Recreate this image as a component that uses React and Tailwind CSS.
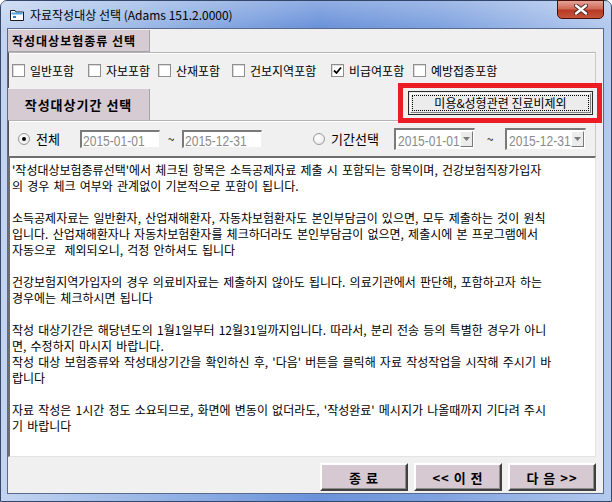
import React from "react";

const kr = "font-['Noto_Sans_CJK_KR','Noto_Sans_CJK_SC',sans-serif]";

const memoLines = [
  "'작성대상보험종류선택'에서 체크된 항목은 소득공제자료 제출 시 포함되는 항목이며, 건강보험직장가입자",
  "의 경우 체크 여부와 관계없이 기본적으로 포함이 됩니다.",
  "",
  "소득공제자료는 일반환자, 산업재해환자, 자동차보험환자도 본인부담금이 있으면, 모두 제출하는 것이 원칙",
  "입니다. 산업재해환자나 자동차보험환자를 체크하더라도 본인부담금이 없으면, 제출시에 본 프로그램에서",
  "자동으로  제외되오니, 걱정 안하셔도 됩니다",
  "",
  "건강보험지역가입자의 경우 의료비자료는 제출하지 않아도 됩니다. 의료기관에서 판단해, 포함하고자 하는",
  "경우에는 체크하시면 됩니다",
  "",
  "작성 대상기간은 해당년도의 1월1일부터 12월31일까지입니다. 따라서, 분리 전송 등의 특별한 경우가 아니",
  "면, 수정하지 마시지 바랍니다.",
  "작성 대상 보험종류와 작성대상기간을 확인하신 후, '다음' 버튼을 클릭해 자료 작성작업을 시작해 주시기 바",
  "랍니다",
  "",
  "자료 작성은 1시간 정도 소요되므로, 화면에 변동이 없더라도, '작성완료' 메시지가 나올때까지 기다려 주시",
  "기 바랍니다",
];

const checks = [
  { label: "일반포함", w: "w-[76px]" },
  { label: "자보포함", w: "w-[70px]" },
  { label: "산재포함", w: "w-[74px]" },
  { label: "건보지역포함", w: "w-[99px]" },
  { label: "비급여포함", w: "w-[82px]", checked: true },
  { label: "예방접종포함", w: "w-[100px]" },
];

function CheckBox({ label, w, checked }) {
  return (
    <div className={`flex items-center gap-[5px] ${w}`}>
      <div className="w-[13px] h-[13px] border border-[#8e8f8f] bg-white shadow-[inset_1px_1px_0_#dcdcdc] flex items-center justify-center">
        {checked && (
          <svg width="9" height="9" viewBox="0 0 9 9">
            <path d="M1 4.5 L3.5 7 L8 1.5" stroke="#000" strokeWidth="1.8" fill="none" />
          </svg>
        )}
      </div>
      <span className="text-[12px] leading-none text-black">{label}</span>
    </div>
  );
}

function Radio({ on, label }) {
  return (
    <div className="flex items-center gap-[6px]">
      <div className="w-[12px] h-[12px] rounded-full border border-[#9a9a9a] bg-[radial-gradient(circle_at_40%_40%,#ffffff,#e4e4e4)] flex items-center justify-center">
        {on && <div className="w-[4px] h-[4px] rounded-full bg-black" />}
      </div>
      <span className="text-[13px] leading-none">{label}</span>
    </div>
  );
}

function DateText({ value }) {
  return (
    <div className="w-[62px] shrink-0">
      <span className="inline-block whitespace-nowrap origin-left scale-x-[0.86] font-['Liberation_Sans',sans-serif] text-[14px] leading-none text-[#8a8a8a]">
        {value}
      </span>
    </div>
  );
}

function DateBox({ value }) {
  return (
    <div className="w-[80px] h-[18px] bg-white border-t-2 border-l-2 border-t-[#7a7a7a] border-l-[#7a7a7a] border-b border-r border-b-[#f0f0f0] border-r-[#f0f0f0] flex items-center pl-[1px]">
      <DateText value={value} />
    </div>
  );
}

function ComboBox({ value }) {
  return (
    <div className="w-[81px] h-[22px] bg-white border-t-2 border-l-2 border-t-[#7a7a7a] border-l-[#7a7a7a] border-b border-r border-b-[#f0f0f0] border-r-[#f0f0f0] flex items-center justify-between pl-[2px] pr-[1px]">
      <DateText value={value} />
      <div className="shrink-0 w-[13px] h-[16px] bg-[#ececec] border border-t-white border-l-white border-r-[#7a7a7a] border-b-[#7a7a7a] flex items-center justify-center">
        <svg width="7" height="4" viewBox="0 0 7 4">
          <path d="M0 0 H7 L3.5 4 Z" fill="#7a7a7a" />
        </svg>
      </div>
    </div>
  );
}

function BottomButton({ children }) {
  return (
    <div className="w-[88px] h-[28px] bg-[#d6c9d2] border-2 border-t-white border-l-white border-r-[#404040] border-b-[#404040] shadow-[inset_-1px_-1px_0_#8c8c8c] flex items-center justify-center">
      <span className="text-[13px] font-bold leading-none tracking-[1px]">{children}</span>
    </div>
  );
}

export default function App() {
  return (
    <div className={`w-[612px] h-[502px] bg-white ${kr} text-black`}>
      <div className="relative w-full h-full rounded-t-[7px] border border-[#34466a] bg-[linear-gradient(90deg,#c3d4f0_0%,#9db9e7_22%,#6a92d9_52%,#7fa2df_72%,#b4caee_100%)] flex flex-col">
        {/* title bar */}
        <div className="h-[27px] flex items-center pl-[9px] bg-[linear-gradient(180deg,rgba(255,255,255,0.25),rgba(255,255,255,0))]">
          <svg width="14" height="12" viewBox="0 0 14 12">
            <path d="M0.5 1.5 H5 L6 3 H13.5 V11.5 H0.5 Z" fill="#ffffff" stroke="#1a1a1a" />
            <rect x="1.5" y="3.5" width="11" height="2" fill="#4aa6e8" />
            <rect x="3" y="7" width="3" height="2" fill="#2a7ad0" />
          </svg>
          <span className="ml-[6px] text-[12px] leading-none text-black">
            자료작성대상 선택 (Adams 151.2.0000)
          </span>
        </div>
        <div className="absolute right-[7px] top-[-1px] w-[47px] h-[19px] rounded-b-[5px] border border-[#4a1008] bg-[linear-gradient(180deg,#e4a398_0%,#d06a58_45%,#b83a26_55%,#c4553a_100%)] flex items-center justify-center">
          <svg width="14" height="11" viewBox="0 0 14 11">
            <path d="M2 1.5 L12 9.5 M12 1.5 L2 9.5" stroke="#4a2420" strokeWidth="4.2" strokeLinecap="round" />
            <path d="M2 1.5 L12 9.5 M12 1.5 L2 9.5" stroke="#ffffff" strokeWidth="2.4" strokeLinecap="round" />
          </svg>
        </div>

        {/* client */}
        <div className="flex-1 ml-[6px] mr-[7px] mb-[7px] border border-[#58698c] bg-[#f0f0f0] flex flex-col pr-[7px]">
          <div className="mt-[1px] w-[142px] h-[22px] bg-[#d6cad3] border-r border-b border-[#a5a5a5] flex items-center pl-[4px]">
            <span className="text-[12px] font-bold tracking-[1px] leading-none">작성대상보험종류 선택</span>
          </div>
          <div className="h-[36px] border-t border-t-[#b4b4b4] border-l border-l-[#505050] border-r border-r-[#c8c8c8] shadow-[inset_0_1px_0_#ffffff] flex items-center pl-[3px]">
            {checks.map((c) => (
              <CheckBox key={c.label} {...c} />
            ))}
          </div>
          <div className="relative h-[32px] flex items-start justify-between">
            <div className="mt-[1px] w-[142px] h-[31px] bg-[#d6cad3] border-r border-[#a5a5a5] flex items-center justify-center">
              <span className="text-[13px] font-bold tracking-[1px] leading-none">작성대상기간 선택</span>
            </div>
            <div className="mt-[3px] mr-[3px] w-[185px] h-[24px] bg-[#ececec] border border-[#2a2a2a] p-[1px]">
              <div className="w-full h-full border border-t-white border-l-white border-r-[#808080] border-b-[#808080] p-[1px]">
                <div className="w-full h-full border border-dotted border-black flex items-center justify-center">
                  <span className="text-[12px] leading-none">미용&amp;성형관련 진료비제외</span>
                </div>
              </div>
            </div>
            <div className="absolute right-[-6px] top-[-5px] w-[204px] h-[40px] border-[5px] border-[#ec1c24]" />
          </div>
          <div className="h-[36px] border-t border-t-[#b4b4b4] border-l border-l-[#505050] border-r border-r-[#c8c8c8] shadow-[inset_0_1px_0_#ffffff] flex items-center">
            <div className="ml-[9px] w-[62px]">
              <Radio on label="전체" />
            </div>
            <DateBox value="2015-01-01" />
            <span className="w-[22px] text-center text-[12px]">~</span>
            <DateBox value="2015-12-31" />
            <div className="ml-[51px] w-[81px]">
              <Radio label="기간선택" />
            </div>
            <ComboBox value="2015-01-01" />
            <span className="w-[30px] text-center text-[12px]">~</span>
            <ComboBox value="2015-12-31" />
          </div>
          <div className="h-[301px] bg-white border-t-2 border-l-2 border-t-[#6e6e6e] border-l-[#6e6e6e] border-b border-r border-b-[#e3e3e3] border-r-[#e3e3e3] pl-[2px] pt-[4px] overflow-hidden">
            {memoLines.map((line, i) => (
              <div key={i} className="h-[16px] text-[12px] leading-[16px] whitespace-pre [word-spacing:1.5px]">
                {line || "\u00a0"}
              </div>
            ))}
          </div>
          <div className="mt-[6px] flex justify-end gap-[6px]">
            <BottomButton>종 료</BottomButton>
            <BottomButton>&lt;&lt; 이 전</BottomButton>
            <BottomButton>다 음 &gt;&gt;</BottomButton>
          </div>
        </div>
      </div>
    </div>
  );
}
